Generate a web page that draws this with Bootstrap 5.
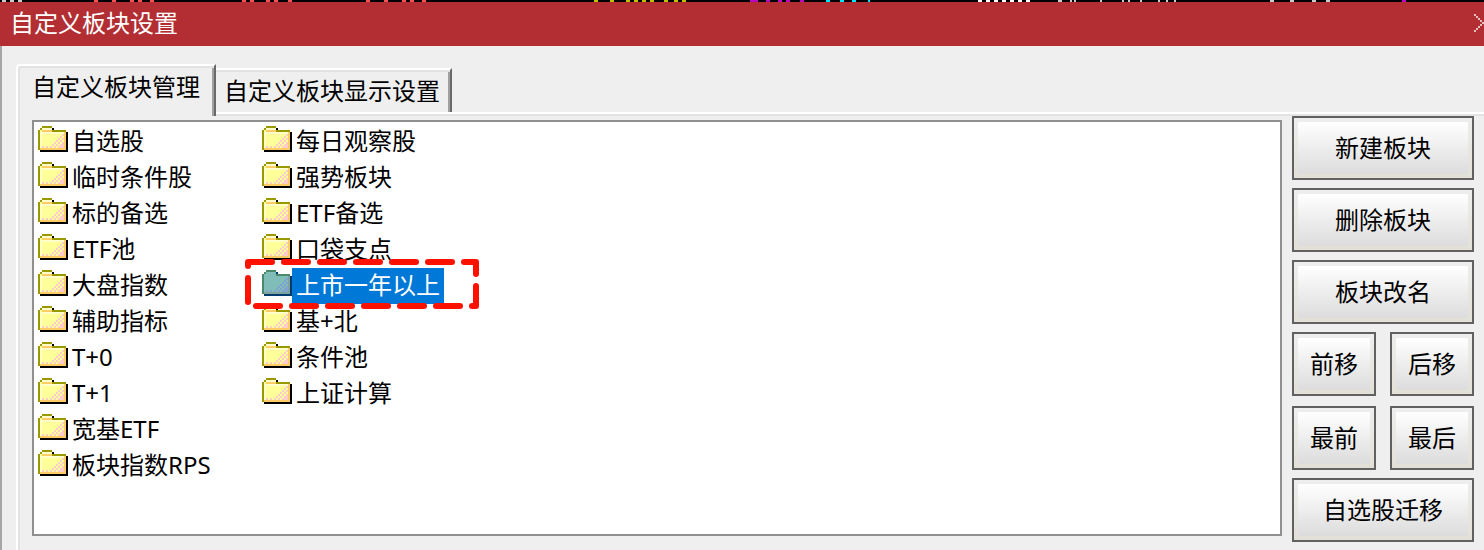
<!DOCTYPE html>
<html lang="zh-CN">
<head>
<meta charset="utf-8">
<meta name="viewport" content="width=device-width, initial-scale=1">
<title>自定义板块设置</title>
<link href="https://cdn.jsdelivr.net/npm/bootstrap@5.3.0/dist/css/bootstrap.min.css" rel="stylesheet">
<style>
  :root { --face: #efefef; --hi: #fff; --soft: #e3e3e3; --mid: #a0a0a0; --dark: #696969; }
  body { font-family: "Noto Sans", "Noto Sans CJK SC", sans-serif; font-size: 24px; line-height: 34px; color: #000; background: var(--face); }
  .ticker { height: 2px; background: #000; }
  .title-bar { height: 44px; background: #b22e33; color: #fff; padding-left: 10px; }
  .title-bar h1 { font-size: 24px; line-height: 34px; padding-bottom: 2px; font-weight: 400; }
  .close-btn { width: 10px; height: 20px; overflow: hidden; }
  .dialog-body { border-left: 2px solid #a6a6a6; padding: 18px 0 0 14px; }
  .tab-strip { border: 0; }
  .tab-strip .tab-btn {
    height: 44px; padding: 2px 10px 2px 8px; border: 0; border-top: 2px solid var(--hi); border-right: 2px solid var(--dark);
    border-radius: 0; background: var(--face); color: #000; line-height: 34px; text-align: left;
    box-shadow: inset 0 2px var(--soft), inset -2px 0 var(--mid);
  }
  .tab-strip .tab-btn.active {
    height: 52px; margin-bottom: -4px; padding: 2px 14px 10px; border-left: 2px solid var(--hi); border-top-left-radius: 4px;
    background: var(--face); color: #000; position: relative; z-index: 1;
    box-shadow: inset 2px 2px var(--soft), inset -2px 0 var(--mid);
  }
  .pane { border-left: 2px solid var(--hi); border-top: 2px solid var(--hi); box-shadow: inset 2px 2px var(--soft); padding: 2px 10px 8px 14px; gap: 10px; }
  .block-list {
    background: #fff; border: 2px solid #8f8f8f; margin: 4px 0 6px; padding: 2px 4px;
    grid-template-rows: repeat(10, 36px); grid-auto-flow: column; grid-auto-columns: 224px; align-content: start; min-width: 0;
  }
  .block-item { position: relative; height: 36px; color: #000; }
  .block-item span { padding: 0 4px 2px; white-space: nowrap; }
  .block-item > svg { width: 30px; height: 26px; flex: none; margin-bottom: 6px; }
  .block-item.selected span { background: #0078d7; color: #fff; }
  .block-item .marker { position: absolute; left: -17px; top: -9px; width: 234px; height: 50px; margin: 0; pointer-events: none; }
  .actions { width: 182px; flex: none; gap: 8px; }
  .pair-grid { grid-template-columns: 1fr 1fr; gap: 10px 14px; }
  .tool-btn {
    height: 64px; padding: 4px; border: 2px solid #616161; border-radius: 0; font-size: 24px; line-height: 34px; color: #000;
    background: linear-gradient(#fff, #dcdcdc) content-box, linear-gradient(#eeeeee, #e2e0d6) padding-box;
  }
  .tool-btn:hover { color: #000; border-color: #0078d7; }
</style>
</head>
<body>
<svg width="0" height="0" class="position-absolute" aria-hidden="true">
  <defs>
    <symbol id="folder" viewBox="0 0 15 13" shape-rendering="crispEdges">
      <path fill="#000" d="M7 1h1v1H7zM8 2h1v1H8zM14 3h1v10H1v-1h13z"/>
      <path fill="#999900" d="M2 0h5v1H2zM1 1h1v1H1zM7 2h7v1H7zM0 2h1v10H0z"/>
      <path fill="#ffff99" d="M2 1h5v1H2zM1 2h6v1H1zM1 3h12v8H1z"/>
      <path fill="#ffffcc" d="M1 3h12v1H1zM1 3h1v8H1zM2 1h5v1H2z"/>
      <path fill="#ffcccc" d="M12 4h1v1h-1zM11 5h1v1h-1zM10 6h1v1h-1zM12 6h1v1h-1zM9 7h1v1H9zM11 7h1v1h-1zM8 8h1v1H8zM10 8h1v1h-1zM12 8h1v1h-1zM7 9h1v1H7zM9 9h1v1H9zM11 9h2v1h-2zM2 10h1v1H2zM4 10h1v1H4zM6 10h1v1H6zM8 10h1v1H8zM10 10h3v1h-3z"/>
      <path fill="#ffcc66" d="M1 11h13v1H1zM13 3h1v9h-1zM2 2h5v1H2z"/>
    </symbol>
    <symbol id="folder-on" viewBox="0 0 15 13" shape-rendering="crispEdges">
      <path fill="#003c6b" d="M7 1h1v1H7zM8 2h1v1H8zM14 3h1v10H1v-1h13z"/>
      <path fill="#4c896b" d="M2 0h5v1H2zM1 1h1v1H1zM7 2h7v1H7zM0 2h1v10H0z"/>
      <path fill="#80bcb8" d="M2 1h5v1H2zM1 2h6v1H1zM1 3h12v8H1z"/>
      <path fill="#80a2d1" d="M12 4h1v1h-1zM11 5h1v1h-1zM10 6h1v1h-1zM12 6h1v1h-1zM9 7h1v1H9zM11 7h1v1h-1zM8 8h1v1H8zM10 8h1v1h-1zM12 8h1v1h-1zM7 9h1v1H7zM9 9h1v1H9zM11 9h2v1h-2zM2 10h1v1H2zM4 10h1v1H4zM6 10h1v1H6zM8 10h1v1H8zM10 10h3v1h-3z"/>
      <path fill="#80a29f" d="M1 11h13v1H1zM13 3h1v9h-1z"/>
    </symbol>
  </defs>
</svg>

<div class="d-flex flex-column min-vh-100 overflow-hidden">
  <div class="ticker overflow-hidden">
    <svg class="d-block" width="1484" height="2" fill="none" stroke-width="2" shape-rendering="crispEdges" aria-hidden="true">
      <path stroke="#ccc" d="M2 1h4m4 0h4m4 0h4M1058 1h4m8 0h2m2 0h2m24 0h2m20 0h2m4 0h2m10 0h2m16 0h2m6 0h2m6 0h2M1270 1h4m16 0h4m18 0h4m10 0h4"/>
      <path stroke="#ff5050" d="M94 1h4m14 0h4m14 0h4m4 0h4m8 0h4M242 1h4m4 0h4m12 0h4m4 0h4m10 0h4M366 1h4m14 0h4m14 0h4m4 0h4m8 0h4"/>
      <path stroke="#c0c000" d="M594 1h4m12 0h4m12 0h4m4 0h4m4 0h4m4 0h4m10 0h4m6 0h4m4 0h4"/>
      <path stroke="#c000c0" d="M750 1h8m8 0h4m8 0h4m4 0h4m10 0h4M1402 1h4"/>
      <path stroke="#00e5ff" d="M826 1h4m10 0h4m8 0h4m12 0h2"/>
      <path stroke="#fff" d="M978 1h4m4 0h4m4 0h4m4 0h4m4 0h4m4 0h4m4 0h4"/>
    </svg>
  </div>

  <header class="title-bar d-flex align-items-center justify-content-between">
    <h1 class="m-0">自定义板块设置</h1>
    <button type="button" class="close-btn btn border-0 rounded-0 p-0 d-flex" aria-label="关闭">
      <svg class="flex-shrink-0" width="18" height="18" viewBox="0 0 9 9" shape-rendering="crispEdges" fill="#e0c0c1" aria-hidden="true">
        <path d="M0 0h1v1H0zM1 1h1v1H1zM2 2h1v1H2zM3 3h1v1H3zM4 4h1v1H4zM3 5h1v1H3zM2 6h1v1H2zM1 7h1v1H1zM0 8h1v1H0zM5 3h1v1H5zM5 5h1v1H5zM6 2h1v1H6zM6 6h1v1H6zM7 1h1v1H7zM7 7h1v1H7zM8 0h1v1H8zM8 8h1v1H8z"/>
      </svg>
    </button>
  </header>

  <main class="dialog-body d-flex flex-column flex-fill">
    <div class="tab-strip nav align-items-end flex-nowrap" role="tablist">
      <button type="button" class="tab-btn nav-link active" role="tab" aria-selected="true" aria-controls="manage">自定义板块管理</button>
      <button type="button" class="tab-btn nav-link" role="tab" aria-selected="false">自定义板块显示设置</button>
    </div>

    <section class="pane d-flex flex-fill" id="manage" role="tabpanel">
      <div class="block-list d-grid flex-fill" role="listbox" aria-label="板块">
        <div class="block-item d-flex align-items-center" role="option"><svg><use href="#folder"/></svg><span>自选股</span></div>
        <div class="block-item d-flex align-items-center" role="option"><svg><use href="#folder"/></svg><span>临时条件股</span></div>
        <div class="block-item d-flex align-items-center" role="option"><svg><use href="#folder"/></svg><span>标的备选</span></div>
        <div class="block-item d-flex align-items-center" role="option"><svg><use href="#folder"/></svg><span>ETF池</span></div>
        <div class="block-item d-flex align-items-center" role="option"><svg><use href="#folder"/></svg><span>大盘指数</span></div>
        <div class="block-item d-flex align-items-center" role="option"><svg><use href="#folder"/></svg><span>辅助指标</span></div>
        <div class="block-item d-flex align-items-center" role="option"><svg><use href="#folder"/></svg><span>T+0</span></div>
        <div class="block-item d-flex align-items-center" role="option"><svg><use href="#folder"/></svg><span>T+1</span></div>
        <div class="block-item d-flex align-items-center" role="option"><svg><use href="#folder"/></svg><span>宽基ETF</span></div>
        <div class="block-item d-flex align-items-center" role="option"><svg><use href="#folder"/></svg><span>板块指数RPS</span></div>
        <div class="block-item d-flex align-items-center" role="option"><svg><use href="#folder"/></svg><span>每日观察股</span></div>
        <div class="block-item d-flex align-items-center" role="option"><svg><use href="#folder"/></svg><span>强势板块</span></div>
        <div class="block-item d-flex align-items-center" role="option"><svg><use href="#folder"/></svg><span>ETF备选</span></div>
        <div class="block-item d-flex align-items-center" role="option"><svg><use href="#folder"/></svg><span>口袋支点</span></div>
        <div class="block-item selected d-flex align-items-center z-1" role="option" aria-selected="true"><svg><use href="#folder-on"/></svg><span>上市一年以上</span>
          <svg class="marker" viewBox="0 0 234 50" aria-hidden="true"><path d="M3 3h228v44H3V3" fill="none" stroke="#ff1100" stroke-width="6" stroke-linecap="round" stroke-linejoin="round" stroke-dasharray="24 12"/></svg>
        </div>
        <div class="block-item d-flex align-items-center" role="option"><svg><use href="#folder"/></svg><span>基+北</span></div>
        <div class="block-item d-flex align-items-center" role="option"><svg><use href="#folder"/></svg><span>条件池</span></div>
        <div class="block-item d-flex align-items-center" role="option"><svg><use href="#folder"/></svg><span>上证计算</span></div>
      </div>

      <div class="actions d-flex flex-column">
        <button type="button" class="tool-btn btn">新建板块</button>
        <button type="button" class="tool-btn btn">删除板块</button>
        <button type="button" class="tool-btn btn">板块改名</button>
        <div class="pair-grid d-grid">
          <button type="button" class="tool-btn btn">前移</button>
          <button type="button" class="tool-btn btn">后移</button>
          <button type="button" class="tool-btn btn">最前</button>
          <button type="button" class="tool-btn btn">最后</button>
        </div>
        <button type="button" class="tool-btn btn">自选股迁移</button>
      </div>
    </section>
  </main>
</div>
<script src="https://cdn.jsdelivr.net/npm/bootstrap@5.3.0/dist/js/bootstrap.bundle.min.js"></script>
</body>
</html>
